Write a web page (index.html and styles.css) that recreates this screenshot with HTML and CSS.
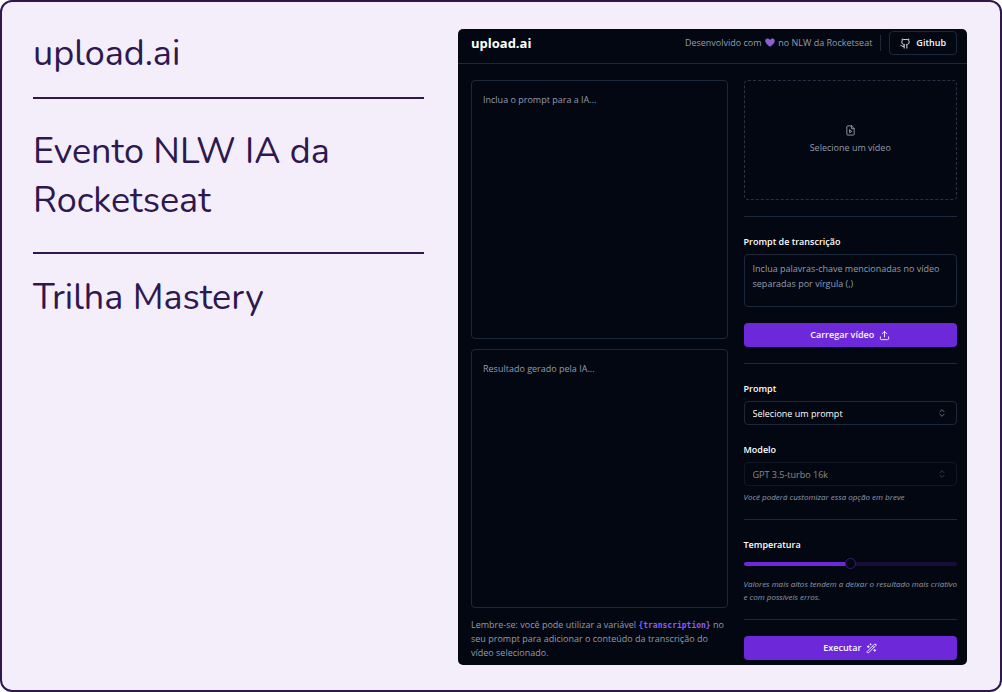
FILE: index.html
```html
<!DOCTYPE html>
<html lang="pt-BR">
<head>
<meta charset="utf-8">
<meta name="viewport" content="width=device-width, initial-scale=1">
<title>upload.ai</title>
<link rel="stylesheet" href="styles.css">
</head>
<body>
<div class="slide">
  <section class="intro">
    <h1 class="intro-text">upload.ai</h1>
    <hr class="intro-rule">
    <p class="intro-text intro-event">Evento NLW IA da Rocketseat</p>
    <hr class="intro-rule">
    <p class="intro-text">Trilha Mastery</p>
  </section>

  <div class="app">
    <header class="app-header">
      <h2 class="brand">upload.ai</h2>
      <div class="header-side">
        <span class="credit">Desenvolvido com
          <svg class="heart" viewBox="0 0 20 18" aria-label="coração"><path fill="#8d5fd3" d="M10 17.5C4 13 .5 9.800.500 5.500.500 2.500 2.800.800 5.200.800 7.300.800 9 2 10 4c1-2 2.700-3.200 4.800-3.200 2.400 0 4.700 1.700 4.700 4.700 0 4.300-3.500 7.500-9.500 12z"/></svg>
          no NLW da Rocketseat</span>
        <span class="divider"></span>
        <button class="btn btn-outline" type="button">
          <svg class="icon" viewBox="0 0 24 24"><path d="M15 22v-4a4.800 4.800 0 0 0-1-3.500c3 0 6-2 6-5.500.080-1.250-.270-2.480-1-3.500.280-1.150.280-2.350 0-3.500 0 0-1 0-3 1.500-2.640-.500-5.360-.500-8 0C6 2 5 2 5 2c-.300 1.150-.300 2.350 0 3.500A5.403 5.403 0 0 0 4 9c0 3.500 3 5.500 6 5.500-.390.490-.680 1.050-.850 1.650-.170.600-.220 1.230-.150 1.850v4"/><path d="M9 18c-4.510 2-5-2-7-2"/></svg>
          Github
        </button>
      </div>
    </header>

    <main class="app-main">
      <div class="editor">
        <textarea class="field area" aria-label="Prompt para a IA" placeholder="Inclua o prompt para a IA..."></textarea>
        <textarea class="field area" aria-label="Resultado" placeholder="Resultado gerado pela IA..." readonly></textarea>
        <p class="reminder">Lembre-se: você pode utilizar a variável <code class="variable">{transcription}</code> no seu prompt para adicionar o conteúdo da transcrição do vídeo selecionado.</p>
      </div>

      <aside class="panel">
        <button class="dropzone" type="button">
          <svg class="icon" viewBox="0 0 24 24"><path d="M14.500 2H6a2 2 0 0 0-2 2v16a2 2 0 0 0 2 2h12a2 2 0 0 0 2-2V7.500L14.500 2z"/><path d="M14 2v6h6"/><path d="m10 11 5 3-5 3v-6Z"/></svg>
          Selecione um vídeo
        </button>
        <hr class="rule">
        <div class="group">
          <label class="label" for="keywords">Prompt de transcrição</label>
          <textarea class="field keywords" id="keywords" placeholder="Inclua palavras-chave mencionadas no vídeo separadas por vírgula (,)"></textarea>
        </div>
        <button class="btn btn-primary" type="button">
          Carregar vídeo
          <svg class="icon" viewBox="0 0 24 24"><path d="M21 15v4a2 2 0 0 1-2 2H5a2 2 0 0 1-2-2v-4"/><path d="M17 8l-5-5-5 5"/><path d="M12 3v12"/></svg>
        </button>
        <hr class="rule">
        <div class="group">
          <label class="label" for="prompt">Prompt</label>
          <div class="select-wrap">
            <select class="select" id="prompt"><option>Selecione um prompt</option></select>
            <svg class="icon chevrons" viewBox="0 0 24 24"><path d="m7 15 5 5 5-5"/><path d="m7 9 5-5 5 5"/></svg>
          </div>
        </div>
        <div class="group">
          <label class="label" for="model">Modelo</label>
          <div class="select-wrap is-disabled">
            <select class="select" id="model" disabled><option>GPT 3.5-turbo 16k</option></select>
            <svg class="icon chevrons" viewBox="0 0 24 24"><path d="m7 15 5 5 5-5"/><path d="m7 9 5-5 5 5"/></svg>
          </div>
          <p class="hint">Você poderá customizar essa opção em breve</p>
        </div>
        <hr class="rule">
        <div class="group">
          <label class="label" for="temperature">Temperatura</label>
          <input class="slider" id="temperature" type="range" min="0" max="1" step="0.1" value="0.5">
          <p class="hint">Valores mais altos tendem a deixar o resultado mais criativo<br>e com possíveis erros.</p>
        </div>
        <hr class="rule">
        <button class="btn btn-primary" type="button">
          Executar
          <svg class="icon" viewBox="0 0 24 24"><path d="m21.640 3.640-1.280-1.280a1.210 1.210 0 0 0-1.720 0L2.360 18.640a1.210 1.210 0 0 0 0 1.720l1.280 1.280a1.200 1.200 0 0 0 1.720 0L21.640 5.360a1.200 1.200 0 0 0 0-1.720Z"/><path d="m14 7 3 3M5 6v4M19 14v4M10 2v2M7 8H3M21 16h-4M11 3H9"/></svg>
        </button>
      </aside>
    </main>
  </div>
</div>
</body>
</html>
```
FILE: styles.css
```css
* {
  box-sizing: border-box;
}

body {
  margin: 0;
  background: #fff;
  font-family: "Open Sans", "Noto Sans", sans-serif;
}

h1, h2, p, hr {
  margin: 0;
}

hr {
  border: 0;
}

button, textarea, select, input {
  margin: 0;
  font: inherit;
}

.slide {
  min-height: 100vh;
  display: grid;
  grid-template-columns: 391fr 509fr;
  gap: 34px;
  padding: 27px 33px 25px 31px;
  border: 2px solid #2e1850;
  border-radius: 12px;
  background: #f4eefb;
  color: #2e1850;
}

.intro {
  display: flex;
  flex-direction: column;
  gap: 19px;
}

.intro-text {
  font: 400 36px/49px Nunito, Lato, sans-serif;
}

.intro-event {
  padding: 9px 0 8px;
}

.intro-rule {
  height: 2px;
  background: #2e1850;
}

.app {
  display: flex;
  flex-direction: column;
  border-radius: 5px;
  background: #030711;
  color: #fff;
  font-size: 9px;
  line-height: 14px;
}

.app-header {
  display: flex;
  align-items: center;
  justify-content: space-between;
  padding: 2px 10px 8px 13px;
  border-bottom: 1px solid #1d283a;
}

.brand {
  font-size: 13px;
  line-height: 18px;
  font-weight: 700;
}

.header-side {
  display: flex;
  align-items: center;
  gap: 8px;
}

.credit {
  color: #919daf;
}

.heart {
  width: 10px;
  height: 9px;
  margin: 0 1px;
  vertical-align: -1px;
}

.divider {
  width: 1px;
  height: 16px;
  background: #1d283a;
}

.icon {
  width: 11px;
  height: 11px;
  flex: none;
  fill: none;
  stroke: currentColor;
  stroke-width: 2;
  stroke-linecap: round;
  stroke-linejoin: round;
}

.btn {
  height: 24px;
  display: flex;
  align-items: center;
  justify-content: center;
  gap: 5px;
  padding: 0 11px;
  border: 0;
  border-radius: 4px;
  color: #f8fafc;
  font-weight: 600;
}

.btn-outline {
  padding: 0 10px;
  border: 1px solid #1d283a;
  background: transparent;
}

.btn-primary {
  background: #6d28d9;
}

.app-main {
  flex: 1;
  display: grid;
  grid-template-columns: 257fr 213fr;
  gap: 16px;
  padding: 16px 10px 5px 13px;
}

.editor {
  display: flex;
  flex-direction: column;
  gap: 10px;
}

.field {
  display: block;
  width: 100%;
  border: 1px solid #1d283a;
  border-radius: 4px;
  background: transparent;
  color: #fff;
  resize: none;
}

.field::placeholder {
  color: #919daf;
  opacity: 1;
}

.area {
  flex: 1;
  padding: 12px 11px;
}

.reminder {
  color: #919daf;
  line-height: 14px;
}

.variable {
  color: #8b5cf6;
  font: 700 8px "DejaVu Sans Mono", monospace;
}

.panel {
  display: flex;
  flex-direction: column;
  gap: 16px;
}

.dropzone {
  height: 120px;
  display: flex;
  flex-direction: column;
  align-items: center;
  justify-content: center;
  gap: 5px;
  border: 1px dashed #273245;
  border-radius: 4px;
  background: transparent;
  color: #919daf;
}

.rule {
  height: 1px;
  background: #1d283a;
}

.group {
  display: flex;
  flex-direction: column;
  gap: 3px;
}

.label {
  line-height: 18px;
  font-weight: 600;
}

.keywords {
  height: 53px;
  padding: 6px 8px;
  line-height: 15px;
}

.select-wrap {
  display: grid;
  align-items: center;
}

.select-wrap > * {
  grid-area: 1 / 1;
}

.is-disabled {
  opacity: 0.5;
}

.select {
  appearance: none;
  width: 100%;
  height: 24px;
  padding: 1px 8px 0;
  border: 1px solid #1d283a;
  border-radius: 4px;
  background: transparent;
  color: #fff;
  font-weight: 500;
  opacity: 1;
}

.chevrons {
  justify-self: end;
  width: 10px;
  height: 10px;
  margin-right: 10px;
  opacity: 0.5;
  pointer-events: none;
}

.hint {
  margin-top: 1px;
  color: #919daf;
  font-size: 8px;
  line-height: 13px;
  font-style: italic;
  white-space: nowrap;
}

.slider {
  appearance: none;
  width: 100%;
  height: 14px;
  margin-bottom: 2px;
  background: transparent;
}

.slider::-webkit-slider-runnable-track {
  height: 4px;
  border-radius: 2px;
  background: linear-gradient(to right, #6d28d9 50%, #180d38 50%);
}

.slider::-webkit-slider-thumb {
  appearance: none;
  width: 11px;
  height: 11px;
  margin-top: -4px;
  border: 1px solid #3b1a78;
  border-radius: 50%;
  background: #030711;
}
```
